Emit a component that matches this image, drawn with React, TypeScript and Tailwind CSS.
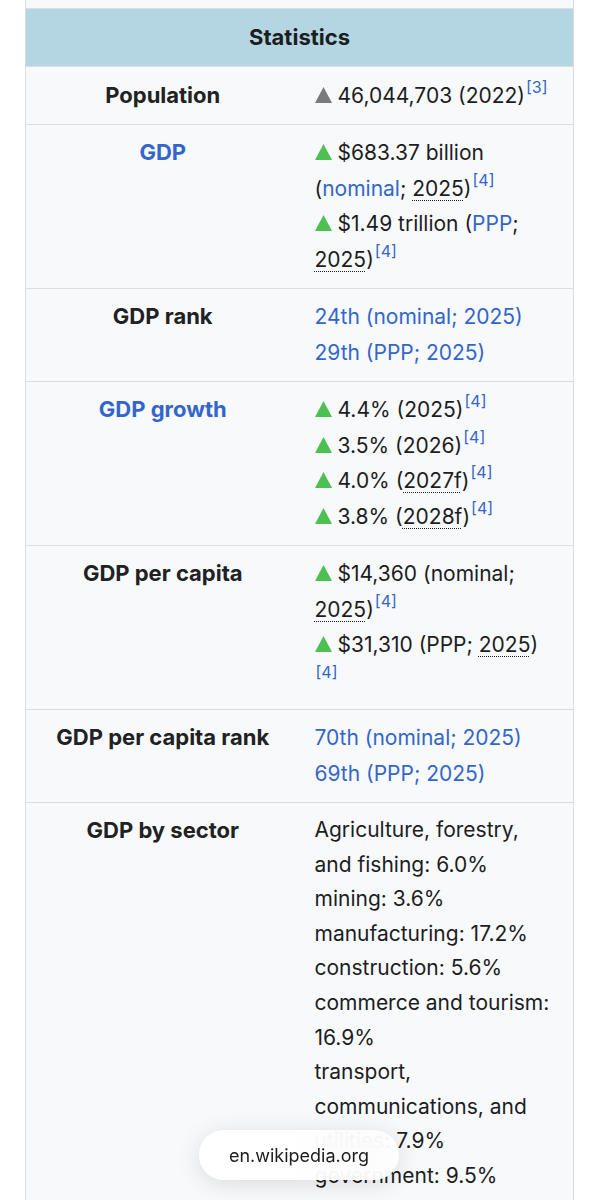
import React from "react";

const LINK = "text-[#3366cc]";

function Up({ gray }: { gray?: boolean }) {
  return (
    <svg width="17" height="16" viewBox="0 0 17 16" className="inline-block align-baseline mr-[6px]">
      <path d="M8.5 0 L17 16 L0 16 Z" fill={gray ? "#7a7a7a" : "#4cc152"} />
    </svg>
  );
}

function Ref({ n }: { n: number }) {
  return <sup className="-top-[10px] text-[16px] text-[#3366cc] ml-[1px]">[{n}]</sup>;
}

function Abbr({ children }: { children: React.ReactNode }) {
  return <span className="underline decoration-dotted decoration-1 underline-offset-[4px]">{children}</span>;
}

function Row({ label, link, children }: { label: string; link?: boolean; children: React.ReactNode }) {
  return (
    <div className="grid grid-cols-2 border-t border-[#dadde2]">
      <div className={`px-3 py-[10.5px] text-center text-[22px] font-bold leading-[35.5px] ${link ? "text-[#3366cc]" : "text-[#202122]"}`}>
        {label}
      </div>
      <div className="px-[15px] py-[10.5px]">{children}</div>
    </div>
  );
}

export default function App() {
  return (
    <div className="min-h-screen bg-white font-['Inter','Liberation_Sans',sans-serif] text-[#1c1d1f]">
      <div className="mx-[25px] w-[549px] border-x border-[#dadde2] bg-[#f8f9fa] text-[21px] leading-[35.5px]">
        <div className="h-[8px]" />
        <div className="border-t border-[#dadde2] bg-[#b3d6e2] py-[11px] text-center text-[22px] font-bold leading-[35px]">
          Statistics
        </div>

        <Row label="Population">
          <Up gray />46,044,703 (2022)<Ref n={3} />
        </Row>

        <Row label="GDP" link>
          <div>
            <Up />$683.37 billion (<span className={LINK}>nominal</span>; <Abbr>2025</Abbr>)<Ref n={4} />
          </div>
          <div>
            <Up />$1.49 trillion (<span className={LINK}>PPP</span>; <Abbr>2025</Abbr>)<Ref n={4} />
          </div>
        </Row>

        <Row label="GDP rank">
          <div className={LINK}>24th (nominal; 2025)</div>
          <div className={LINK}>29th (PPP; 2025)</div>
        </Row>

        <Row label="GDP growth" link>
          <div><Up />4.4% (2025)<Ref n={4} /></div>
          <div><Up />3.5% (2026)<Ref n={4} /></div>
          <div><Up />4.0% (<Abbr>2027f</Abbr>)<Ref n={4} /></div>
          <div><Up />3.8% (<Abbr>2028f</Abbr>)<Ref n={4} /></div>
        </Row>

        <Row label="GDP per capita">
          <div>
            <Up />$14,360 (nominal; <Abbr>2025</Abbr>)<Ref n={4} />
          </div>
          <div>
            <Up />$31,310 (PPP; <Abbr>2025</Abbr>)<Ref n={4} />
          </div>
        </Row>

        <Row label="GDP per capita rank">
          <div className={LINK}>70th (nominal; 2025)</div>
          <div className={LINK}>69th (PPP; 2025)</div>
        </Row>

        <Row label="GDP by sector">
          <div className="leading-[34.6px]">
            <div>Agriculture, forestry, and fishing: 6.0%</div>
            <div>mining: 3.6%</div>
            <div>manufacturing: 17.2%</div>
            <div>construction: 5.6%</div>
            <div>commerce and tourism: 16.9%</div>
            <div>transport, communications, and utilities: 7.9%</div>
            <div>government: 9.5%</div>
            <div>other: 33.3%</div>
          </div>
        </Row>
      </div>

      <div className="fixed bottom-[20px] left-1/2 flex h-[50px] w-[200px] -translate-x-1/2 items-center justify-center rounded-full bg-white/90 text-[18px] text-[#1c1c1e] shadow-[0_4px_24px_rgba(0,0,0,0.12)] backdrop-blur-lg">
        en.wikipedia.org
      </div>
    </div>
  );
}
